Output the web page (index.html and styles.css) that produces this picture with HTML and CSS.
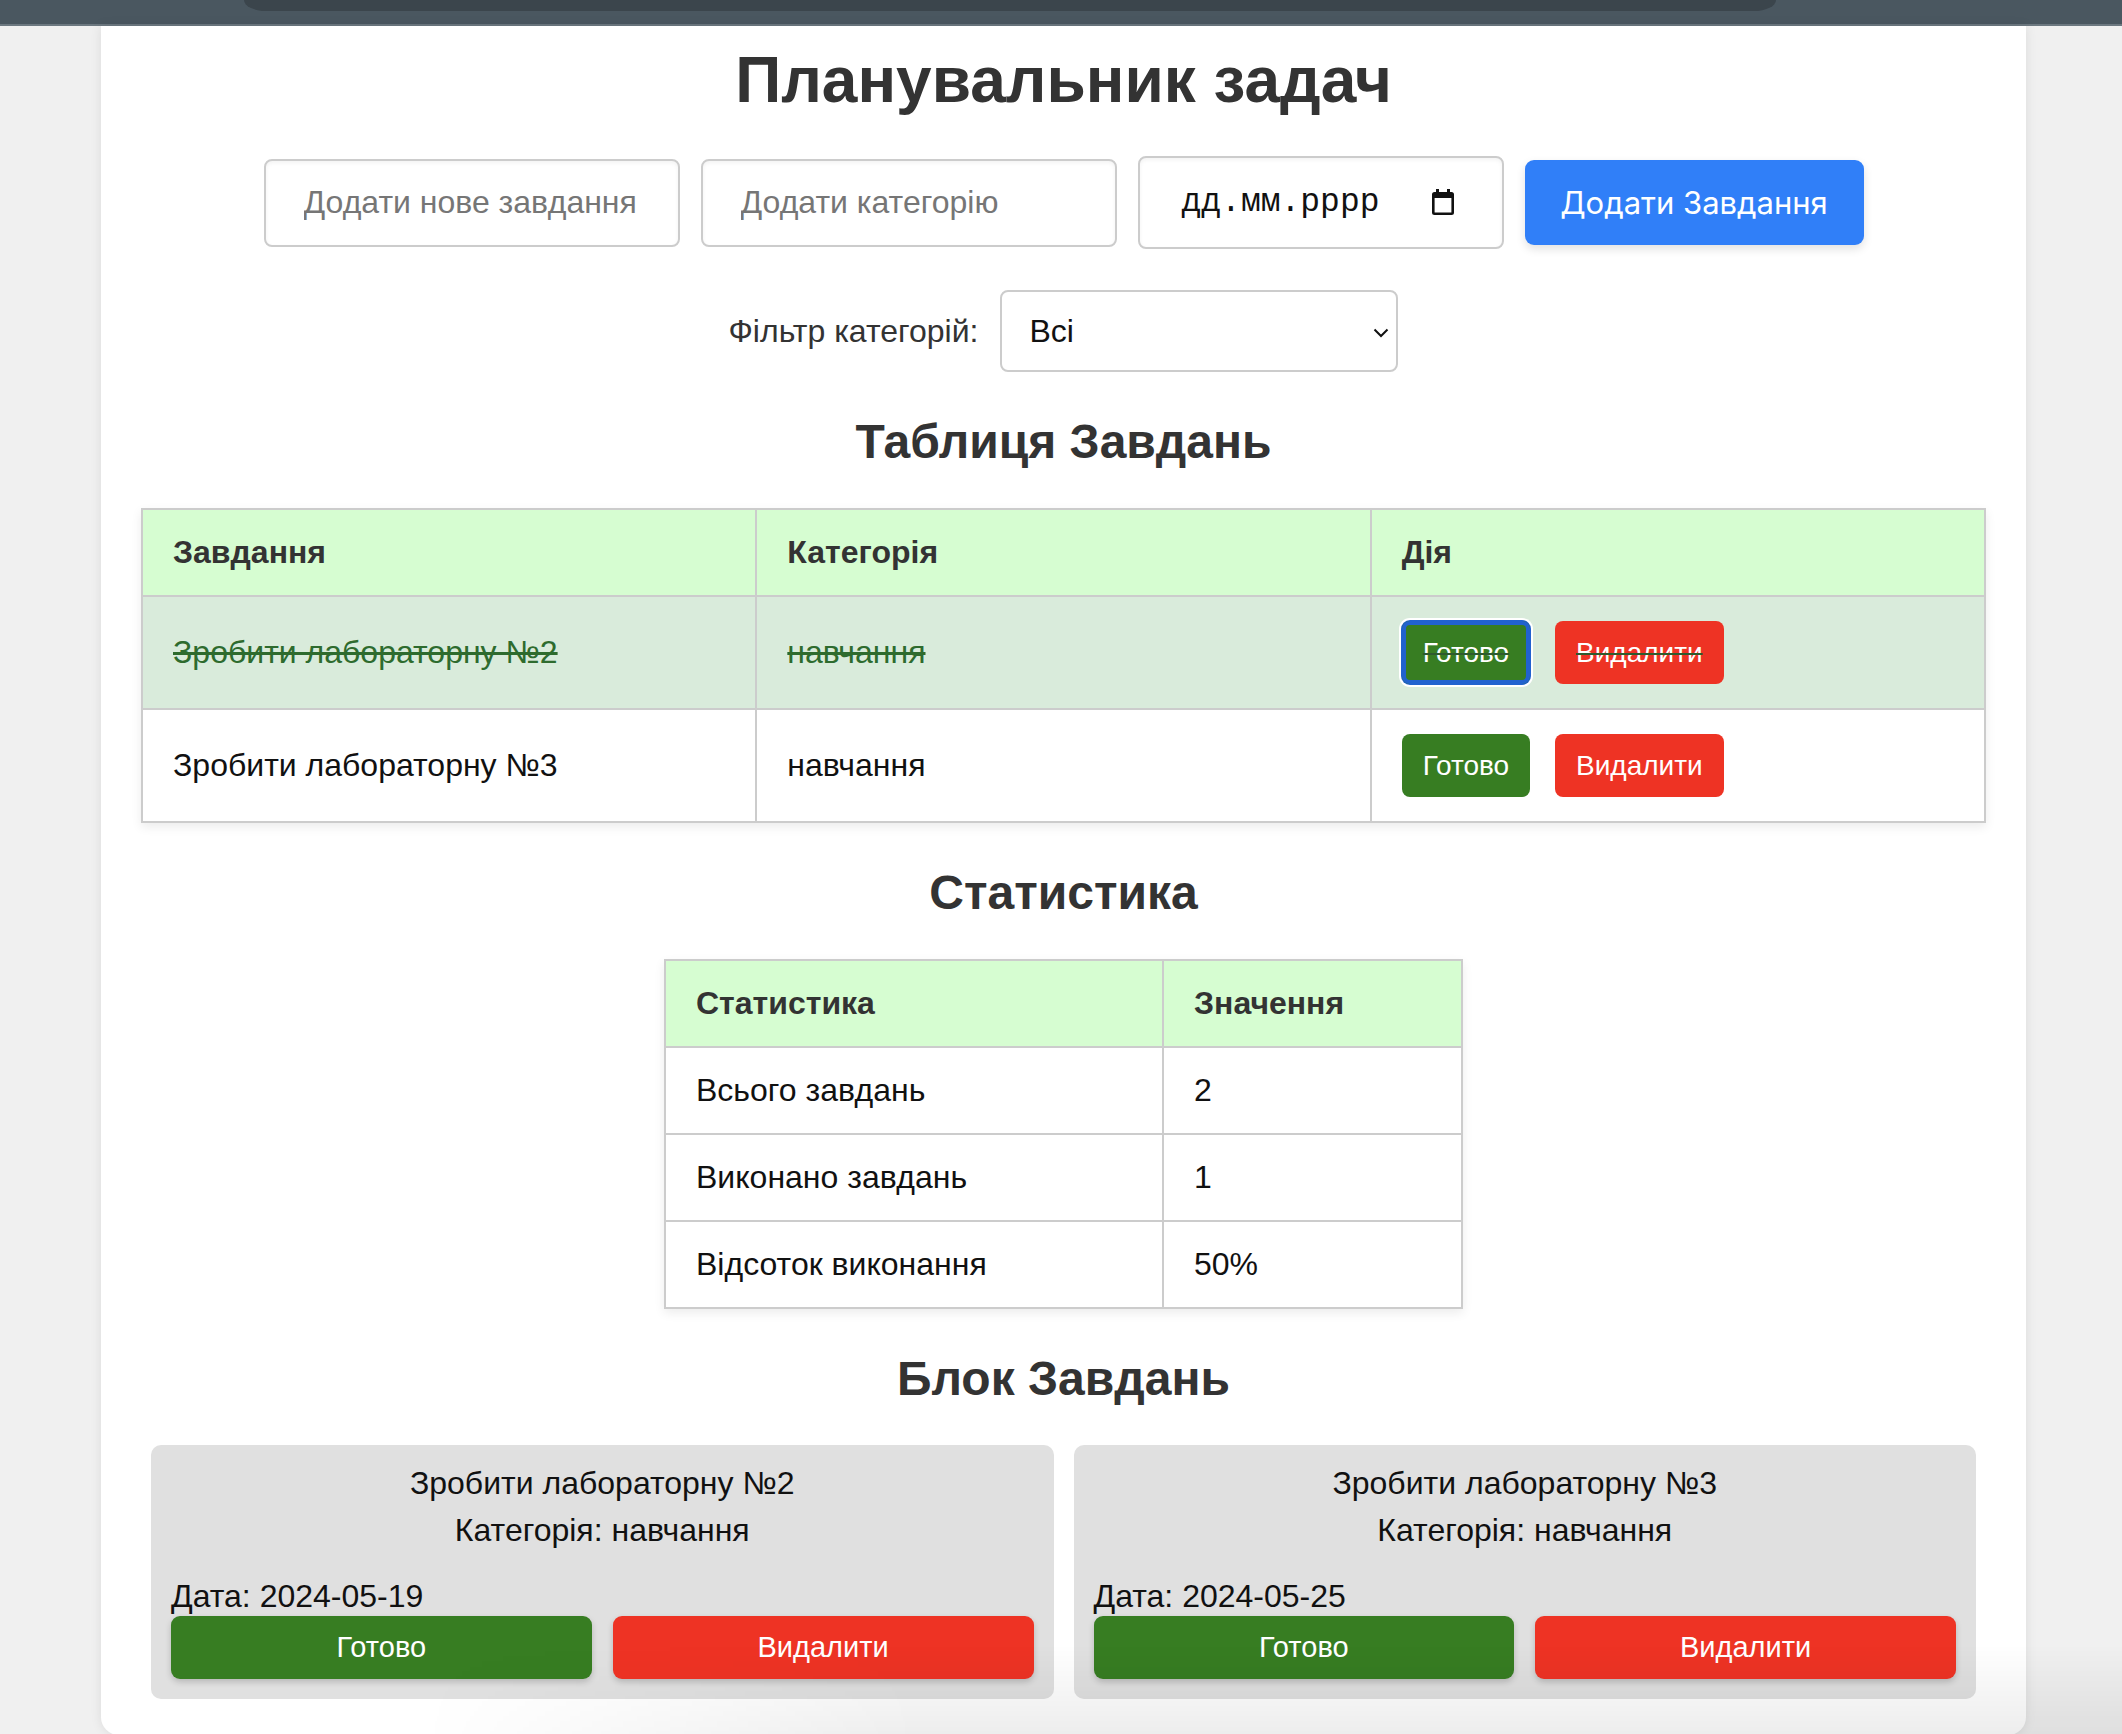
FILE: index.html
```html
<!DOCTYPE html>
<html lang="uk">
<head>
<meta charset="utf-8">
<title>Планувальник задач</title>
<link rel="stylesheet" href="styles.css">
</head>
<body>
<div class="topbar"><div class="topbar-pill"></div></div>
<main class="container">
  <h1 class="title">Планувальник задач</h1>

  <div class="add-row">
    <input class="field field-text" type="text" placeholder="Додати нове завдання">
    <input class="field field-text" type="text" placeholder="Додати категорію">
    <div class="field date-field">
      <span class="date-text">дд.мм.рррр</span>
      <svg class="cal-icon" width="22" height="26" viewBox="0 0 22 26" aria-hidden="true">
        <rect x="4" y="0" width="3" height="5" fill="#111"/>
        <rect x="15" y="0" width="3" height="5" fill="#111"/>
        <path fill="#111" fill-rule="evenodd" d="M2.5 3h17A2.5 2.5 0 0 1 22 5.5v18a2.5 2.5 0 0 1-2.5 2.5h-17A2.5 2.5 0 0 1 0 23.5v-18A2.5 2.5 0 0 1 2.5 3zM2.6 9v14.4h16.8V9z"/>
      </svg>
    </div>
    <button class="add-btn" type="button">Додати Завдання</button>
  </div>

  <div class="filter-row">
    <label class="filter-label" for="flt">Фільтр категорій:</label>
    <div class="select-wrap">
      <select id="flt" class="select"><option>Всі</option></select>
      <svg class="chev" width="16" height="10" viewBox="0 0 16 10" aria-hidden="true">
        <path d="M1.5 1.5l6.5 6.5 6.5-6.5" fill="none" stroke="#111" stroke-width="2"/>
      </svg>
    </div>
  </div>

  <h2 class="section-title">Таблиця Завдань</h2>
  <table class="grid tasks">
    <thead>
      <tr><th>Завдання</th><th>Категорія</th><th>Дія</th></tr>
    </thead>
    <tbody>
      <tr class="done">
        <td><span class="strike">Зробити лабораторну №2</span></td>
        <td><span class="strike">навчання</span></td>
        <td class="actions">
          <button class="btn btn-ok btn-sm focused" type="button"><span class="strike-btn">Готово</span></button>
          <button class="btn btn-del btn-sm" type="button"><span class="strike-btn">Видалити</span></button>
        </td>
      </tr>
      <tr>
        <td>Зробити лабораторну №3</td>
        <td>навчання</td>
        <td class="actions">
          <button class="btn btn-ok btn-sm" type="button">Готово</button>
          <button class="btn btn-del btn-sm" type="button">Видалити</button>
        </td>
      </tr>
    </tbody>
  </table>

  <h2 class="section-title">Статистика</h2>
  <table class="grid stats">
    <thead>
      <tr><th class="stat-name">Статистика</th><th>Значення</th></tr>
    </thead>
    <tbody>
      <tr><td>Всього завдань</td><td>2</td></tr>
      <tr><td>Виконано завдань</td><td>1</td></tr>
      <tr><td>Відсоток виконання</td><td>50%</td></tr>
    </tbody>
  </table>

  <h2 class="section-title">Блок Завдань</h2>
  <div class="cards">
    <div class="card">
      <p class="card-title">Зробити лабораторну №2</p>
      <p class="card-cat">Категорія: навчання</p>
      <p class="card-date">Дата: 2024-05-19</p>
      <div class="card-actions">
        <button class="btn btn-ok btn-lg" type="button">Готово</button>
        <button class="btn btn-del btn-lg" type="button">Видалити</button>
      </div>
    </div>
    <div class="card">
      <p class="card-title">Зробити лабораторну №3</p>
      <p class="card-cat">Категорія: навчання</p>
      <p class="card-date">Дата: 2024-05-25</p>
      <div class="card-actions">
        <button class="btn btn-ok btn-lg" type="button">Готово</button>
        <button class="btn btn-del btn-lg" type="button">Видалити</button>
      </div>
    </div>
  </div>
</main>
<div class="shade" aria-hidden="true"></div>
</body>
</html>
```

FILE: styles.css
```css
* { box-sizing: border-box; }

html, body {
  margin: 0;
  padding: 0;
}

body {
  background: #f0f0f0;
  font-family: "Liberation Sans", Arial, sans-serif;
  font-size: 32px;
  color: #111;
  overflow: hidden;
}

.topbar {
  height: 26px;
  background: #4a5760;
  border-bottom: 2px solid #6c7880;
  padding: 0 0 0 244px;
}

.topbar-pill {
  width: 1532px;
  height: 11px;
  background: #3b454c;
  border-radius: 0 0 22px 22px / 0 0 11px 11px;
}

.container {
  width: 1925px;
  margin: 0 0 0 101px;
  background: #fff;
  padding: 0 40px 36px;
  border-radius: 0 0 18px 18px;
  box-shadow: 0 0 12px rgba(0, 0, 0, 0.09);
}

.title {
  margin: 0;
  padding-top: 17px;
  font-size: 64px;
  line-height: 74px;
  font-weight: bold;
  color: #333;
  text-align: center;
}

/* add row */
.add-row {
  margin-top: 39px;
  height: 93px;
  display: flex;
  align-items: center;
  justify-content: center;
  gap: 21px;
}

.field {
  border: 2px solid #ccc;
  border-radius: 8px;
  background: #fff;
  box-shadow: inset 0 2px 4px rgba(0, 0, 0, 0.05);
  font-family: "Liberation Sans", Arial, sans-serif;
  font-size: 32px;
  color: #111;
}

.field-text {
  width: 416px;
  height: 88px;
  padding: 0 38px;
  outline: none;
}

.field-text::placeholder {
  color: #767676;
}

.date-field {
  width: 366px;
  height: 93px;
  display: flex;
  align-items: center;
  padding: 0 48px 0 42px;
}

.date-text {
  font-family: "Liberation Mono", "DejaVu Sans Mono", monospace;
  font-size: 33px;
  color: #111;
}

.cal-icon {
  margin-left: auto;
  margin-top: -2px;
}

.add-btn {
  width: 339px;
  height: 85px;
  border: none;
  border-radius: 9px;
  background: #307ff8;
  color: #fff;
  font-family: Inter, "Noto Sans", sans-serif;
  font-size: 31px;
  box-shadow: 0 4px 10px rgba(0, 0, 0, 0.12);
  padding: 0;
}

/* filter */
.filter-row {
  margin-top: 41px;
  display: flex;
  align-items: center;
  justify-content: center;
  gap: 22px;
}

.filter-label {
  color: #333;
  font-size: 32px;
}

.select-wrap {
  position: relative;
  width: 398px;
  height: 82px;
}

.select {
  appearance: none;
  -webkit-appearance: none;
  width: 100%;
  height: 100%;
  border: 2px solid #ccc;
  border-radius: 8px;
  background: #fff;
  padding: 0 27px;
  font-family: "Liberation Sans", Arial, sans-serif;
  font-size: 32px;
  color: #111;
}

.chev {
  position: absolute;
  right: 9px;
  top: 38px;
  pointer-events: none;
}

/* headings */
.section-title {
  margin: 42px 0 39px;
  font-size: 48px;
  line-height: 55px;
  font-weight: bold;
  color: #333;
  text-align: center;
}

/* tables */
.grid {
  border-collapse: collapse;
  box-shadow: 0 4px 10px rgba(0, 0, 0, 0.08);
}

.grid th,
.grid td {
  border: 2px solid #ccc;
  padding: 24px 30px;
  line-height: 37px;
  text-align: left;
  vertical-align: middle;
}

.grid th {
  background: #d6fdd1;
  color: #333;
  font-weight: bold;
}

.tasks {
  width: 100%;
  table-layout: fixed;
}

.tasks .done td {
  background: #d9ebdb;
  color: #2e6b2e;
}

.strike {
  text-decoration: line-through;
  text-decoration-color: #2e6b2e;
}

.strike-btn {
  text-decoration: line-through;
  text-decoration-color: #2e5a2e;
  text-decoration-thickness: 2px;
}

.stats {
  width: 799px;
  margin: 0 auto;
  table-layout: fixed;
}

.stats .stat-name {
  width: 498px;
}

/* buttons */
.btn {
  border: none;
  color: #fff;
  font-family: "Liberation Sans", Arial, sans-serif;
  cursor: pointer;
}

.btn-ok { background: #377d22; }
.btn-del { background: #ee3324; }

.btn-sm {
  height: 63px;
  padding: 0 21px;
  font-size: 28px;
  border-radius: 8px;
  vertical-align: middle;
}

.actions .btn-sm + .btn-sm {
  margin-left: 16px;
}

.focused {
  box-shadow: inset 0 0 0 4px #2162cf, 0 0 0 1px #2162cf, 0 0 0 3px #fff;
}

/* cards */
.cards {
  display: flex;
}

.card {
  flex: 1 1 0;
  margin: 0 10px;
  padding: 20px;
  background: #e0e0e0;
  border-radius: 10px;
  text-align: center;
}

.card p {
  margin: 0;
  line-height: 37px;
  color: #111;
}

.card-title { margin-bottom: 10px !important; }
.card-cat { margin-bottom: 29px !important; }
.card-date { text-align: left; }

.card-actions {
  margin-top: 1px;
  display: flex;
  gap: 21px;
}

.btn-lg {
  flex: 1 1 0;
  height: 63px;
  font-size: 29px;
  border-radius: 9px;
  box-shadow: 0 3px 6px rgba(0, 0, 0, 0.18);
}

/* screenshot shadow overlay at the bottom edge */
.shade {
  position: fixed;
  left: 420px;
  right: 0;
  bottom: 0;
  height: 90px;
  pointer-events: none;
  background: linear-gradient(to bottom, rgba(0, 0, 0, 0), rgba(0, 0, 0, 0.07));
  -webkit-mask-image: linear-gradient(to right, transparent, #000 500px);
  mask-image: linear-gradient(to right, transparent, #000 500px);
}
```
